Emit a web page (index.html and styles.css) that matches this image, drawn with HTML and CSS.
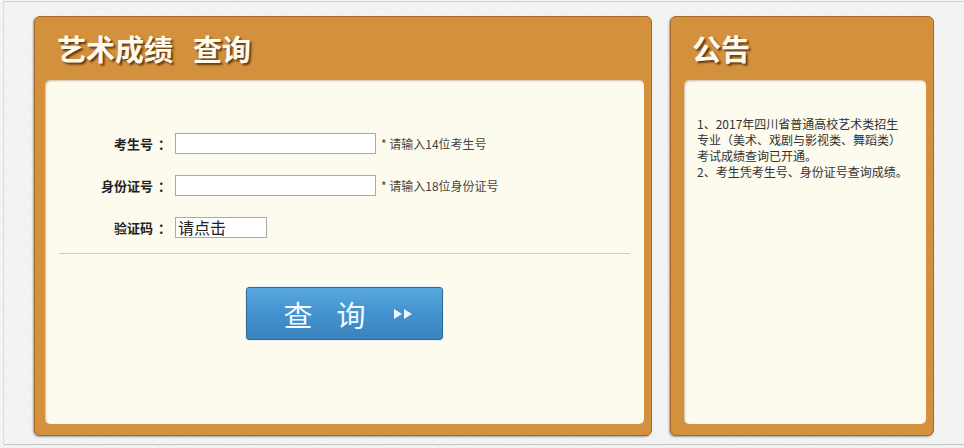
FILE: index.html
```html
<!DOCTYPE html>
<html lang="zh-CN">
<head>
    <meta charset="UTF-8">
    <title>艺术成绩查询</title>
    <link rel="stylesheet" href="styles.css">
</head>
<body>
    <div class="page">
        <div class="panel main">
            <h2 class="panel-title">艺术成绩<span class="gap">查询</span></h2>
            <div class="panel-body">
                <form class="query-form" onsubmit="return false;">
                    <div class="row">
                        <label for="ksh">考生号<span class="colon">：</span></label>
                        <input type="text" id="ksh" class="field">
                        <span class="hint">* 请输入14位考生号</span>
                    </div>
                    <div class="row">
                        <label for="sfz">身份证号<span class="colon">：</span></label>
                        <input type="text" id="sfz" class="field">
                        <span class="hint">* 请输入18位身份证号</span>
                    </div>
                    <div class="row">
                        <label>验证码<span class="colon">：</span></label>
                        <div class="captcha">请点击</div>
                    </div>
                    <div class="divider"></div>
                    <div class="actions">
                        <button type="submit" class="btn-query">
                            <span>查</span><span>询</span>
                            <svg width="22" height="12" viewBox="0 0 22 12"><path d="M2 1l8 5-8 5z M12 1l8 5-8 5z" fill="#eef6ff"/></svg>
                        </button>
                    </div>
                </form>
            </div>
        </div>

        <div class="panel notice">
            <h2 class="panel-title">公告</h2>
            <div class="panel-body">
                <p class="notice-text">1、2017年四川省普通高校艺术类招生专业（美术、戏剧与影视类、舞蹈类）考试成绩查询已开通。<br>2、考生凭考生号、身份证号查询成绩。</p>
            </div>
        </div>
    </div>
</body>
</html>
```

FILE: styles.css
```css
html, body {
    margin: 0;
    padding: 0;
}

body {
    font-family: "Noto Sans CJK SC", "Liberation Sans", sans-serif;
    background: repeating-linear-gradient(45deg, #f5f5f5 0, #f5f5f5 2px, #eeeeee 2px, #eeeeee 3px);
    height: 448px;
    overflow: hidden;
}

.page {
    margin: 1px 0 0 3px;
    height: 444px;
    border-top: 1px solid #cfcfcf;
    border-left: 1px solid #dcdcdc;
    border-bottom: 1px solid #c4c4c4;
    box-sizing: border-box;
    display: flex;
    gap: 18px;
    padding: 14px 0 0 30px;
}

.panel {
    background: #d4913d;
    border: 1px solid #a7692a;
    border-radius: 6px;
    box-shadow: -1px 1px 2px rgba(0,0,0,0.35);
    height: 420px;
    box-sizing: border-box;
    display: flex;
    flex-direction: column;
    padding: 0 7px 11px 10px;
}

.main {
    width: 618px;
}

.notice {
    width: 264px;
    padding-left: 13px;
}

.panel-title {
    margin: 0;
    height: 63px;
    line-height: 62px;
    padding-left: 12px;
    font-size: 29px;
    font-weight: bold;
    color: #fffaf0;
    text-shadow: 2px 2px 2px rgba(60,30,0,0.75);
}

.notice .panel-title {
    padding-left: 8px;
}

.gap {
    margin-left: 20px;
}

.panel-body {
    flex: 1;
    background: #fdfaee;
    border-radius: 5px;
    box-shadow: inset 1px 1px 2px rgba(120,70,20,0.35);
}

.query-form {
    padding-top: 53px;
}

.row {
    display: flex;
    align-items: center;
    height: 21px;
    margin-bottom: 21px;
}

.row label {
    width: 126px;
    text-align: right;
    font-size: 13px;
    font-weight: bold;
    color: #222;
    margin-right: 4px;
}

.colon {
    margin-left: 5px;
}

.field {
    width: 201px;
    height: 21px;
    box-sizing: border-box;
    border: 1px solid #a9a9a9;
    background: #fff;
    padding: 0 3px;
    margin: 0;
}

.hint {
    font-size: 12px;
    color: #444;
    margin-left: 5px;
}

.captcha {
    width: 92px;
    height: 21px;
    box-sizing: border-box;
    border: 1px solid #a9a9a9;
    background: #fff;
    font-size: 16px;
    line-height: 19px;
    color: #222;
    padding-left: 2px;
}

.divider {
    margin: -6px 14px 0;
    border-top: 1px solid #d3cbb8;
}

.actions {
    display: flex;
    justify-content: center;
    padding-top: 33px;
}

.btn-query {
    width: 197px;
    height: 53px;
    border: 1px solid #2d6a9c;
    border-radius: 3px;
    background: linear-gradient(#58a7dc, #4392cf 50%, #3a83bd);
    box-shadow: 0 0 0 1px #e6f1f8;
    color: #f4f9ff;
    font-family: "Noto Sans CJK SC", sans-serif;
    font-size: 29px;
    display: flex;
    align-items: center;
    justify-content: center;
    gap: 24px;
    padding: 0 0 0 8px;
    cursor: pointer;
}

.btn-query svg {
    margin-left: 2px;
}

.notice-text {
    margin: 0;
    padding: 36px 0 0 13px;
    width: 212px;
    font-size: 12px;
    line-height: 16px;
    color: #333;
}
```
